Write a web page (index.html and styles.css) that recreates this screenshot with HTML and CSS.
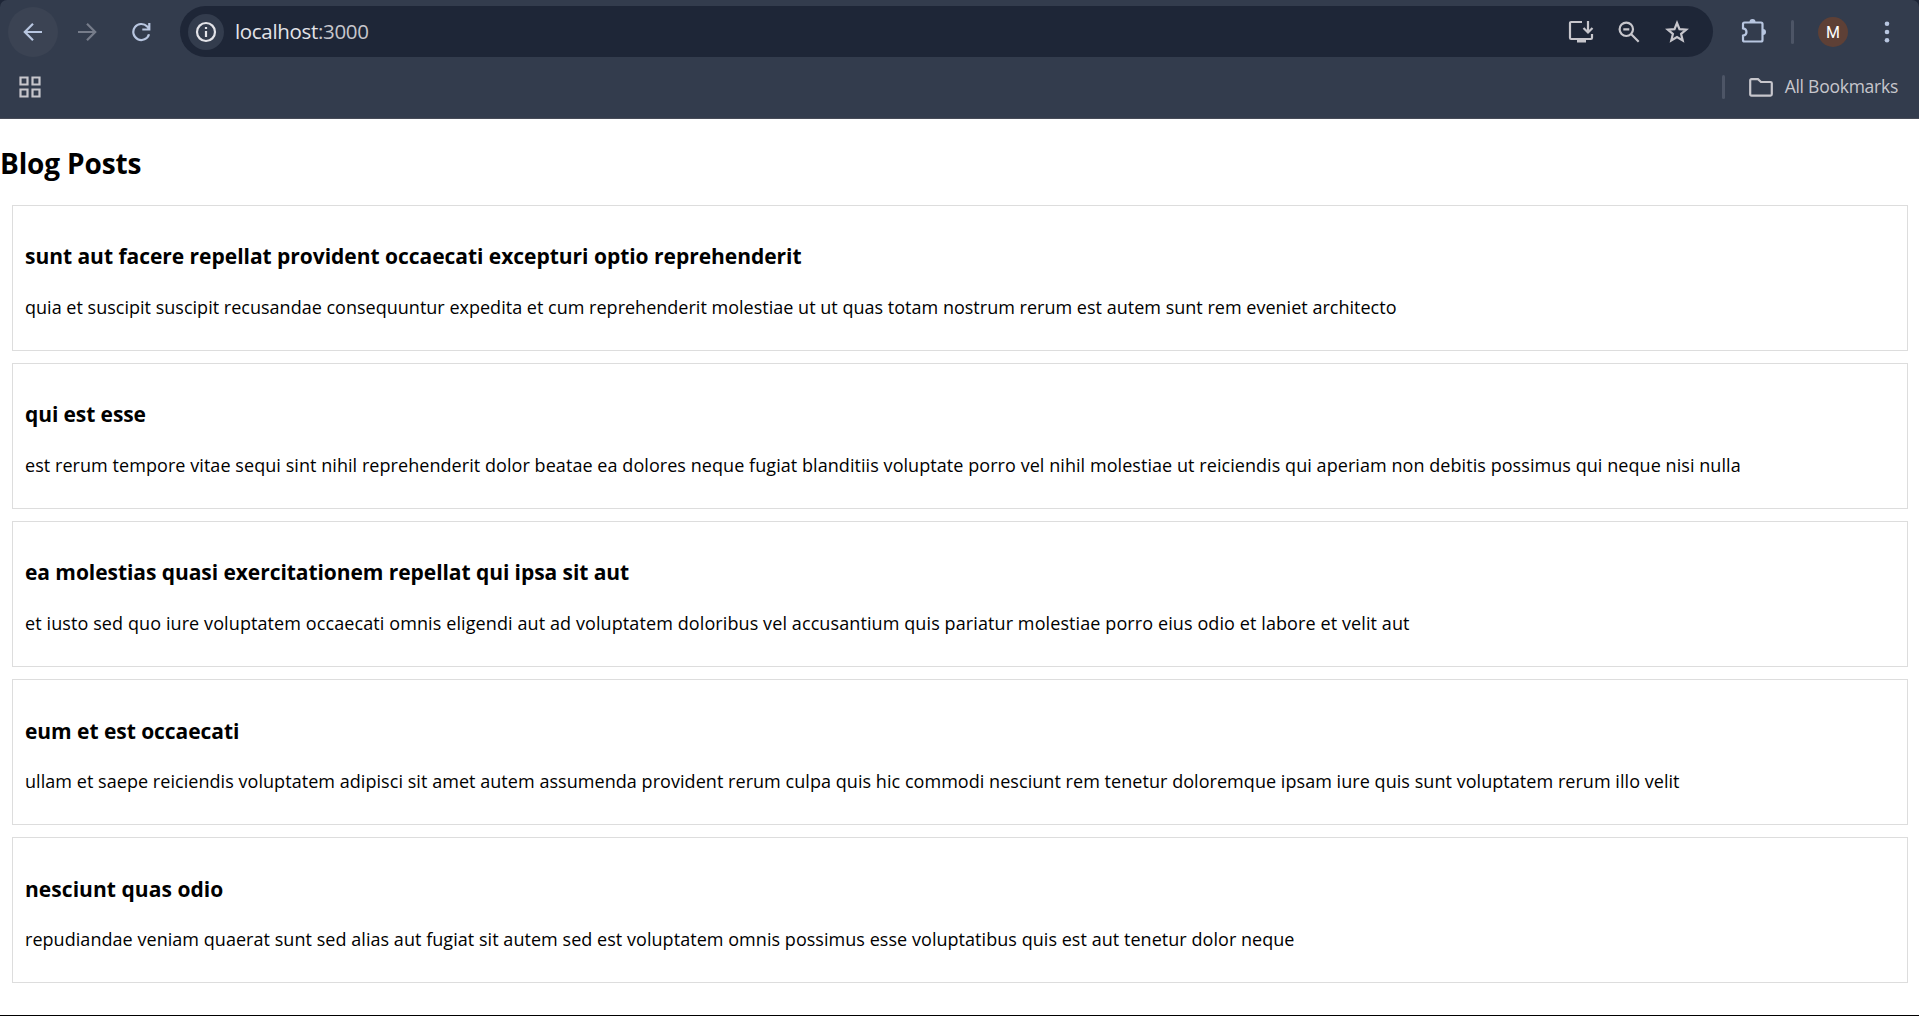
FILE: index.html
```html
<!DOCTYPE html>
<html lang="en">
<head>
<meta charset="utf-8">
<title>Blog Posts</title>
<link rel="stylesheet" href="styles.css">
</head>
<body>
<header class="browser">
  <div class="toolbar">
    <button class="nav nav-back" aria-label="Back"><svg width="20" height="20" viewBox="0 0 20 20"><path d="M19 10H2.5M10 1.8 1.8 10l8.200 8.200"/></svg></button>
    <button class="nav nav-forward" aria-label="Forward"><svg width="20" height="20" viewBox="0 0 20 20"><path d="M1 10h16.500M10 1.800 18.200 10 10 18.200"/></svg></button>
    <button class="nav" aria-label="Reload"><svg width="20" height="20" viewBox="0 0 20 20"><path d="M18 12.200A8 8 0 1 1 16.200 4.600L18 6.500M18.300 1v6.500h-7"/></svg></button>
    <div class="address">
      <span class="site-info"><svg width="22" height="22" viewBox="0 0 22 22"><circle cx="11" cy="11" r="9"/><path d="M11 10v6M11 6v2"/></svg></span>
      <span class="url">localhost<span class="port">:3000</span></span>
      <span class="address-icons">
        <svg width="26" height="24" viewBox="0 0 26 24"><path d="M14 2H3.200Q2 2 2 3.200v14.600Q2 19 3.200 19h19.600q1.200 0 1.200-1.200V14M20 1v11M15.500 8l4.500 4.500L24.500 8"/><path class="solid" d="M9 19h9v3.500h-9z"/></svg>
        <svg width="22" height="22" viewBox="0 0 22 22"><circle cx="8.300" cy="8.300" r="6.700"/><path d="m13 13 7.700 7.700M5.300 8.300h6"/></svg>
        <svg width="24" height="23" viewBox="0 0 24 23"><path d="m12 3 2.500 6.200 6.700.5-5.100 4.300 1.600 6.500L12 17l-5.700 3.500L7.900 14 2.800 9.700l6.700-.5z"/></svg>
      </span>
    </div>
    <svg class="extensions" width="26" height="26" viewBox="0 0 26 26"><path d="M3.500 4.500H20Q21.500 4.500 21.500 6v16q0 1.500-1.500 1.500H3.500Q2 23.500 2 22v-4.300q3.500-.5 3.500-3.700T2 10.300V6Q2 4.500 3.500 4.500z"/><path class="solid" d="M8.500 4a3 3 0 0 1 6 0zM22 11a3 3 0 0 1 0 6z"/></svg>
    <span class="divider"></span>
    <span class="avatar">M</span>
    <svg class="menu" width="6" height="22" viewBox="0 0 6 22"><circle cx="3" cy="2.700" r="2.300"/><circle cx="3" cy="11" r="2.300"/><circle cx="3" cy="19.300" r="2.300"/></svg>
  </div>
  <div class="bookmarks">
    <svg width="22" height="22" viewBox="0 0 22 22"><path d="M1.500 1.500h7v7h-7zM13.500 1.500h7v7h-7zM1.500 13.500h7v7h-7zM13.500 13.500h7v7h-7z"/></svg>
    <span class="divider"></span>
    <svg class="folder" width="24" height="19" viewBox="0 0 24 19"><path d="M1.200 2.500q0-1.300 1.300-1.300H9L12 4h9.500q1.300 0 1.300 1.300v11q0 1.300-1.300 1.300h-19q-1.300 0-1.300-1.300z"/></svg>
    <span class="bookmarks-label">All Bookmarks</span>
  </div>
</header>
<main>
  <h1>Blog Posts</h1>
  <article class="post"><h3>sunt aut facere repellat provident occaecati excepturi optio reprehenderit</h3><p>quia et suscipit suscipit recusandae consequuntur expedita et cum reprehenderit molestiae ut ut quas totam nostrum rerum est autem sunt rem eveniet architecto</p></article>
  <article class="post"><h3>qui est esse</h3><p>est rerum tempore vitae sequi sint nihil reprehenderit dolor beatae ea dolores neque fugiat blanditiis voluptate porro vel nihil molestiae ut reiciendis qui aperiam non debitis possimus qui neque nisi nulla</p></article>
  <article class="post"><h3>ea molestias quasi exercitationem repellat qui ipsa sit aut</h3><p>et iusto sed quo iure voluptatem occaecati omnis eligendi aut ad voluptatem doloribus vel accusantium quis pariatur molestiae porro eius odio et labore et velit aut</p></article>
  <article class="post"><h3>eum et est occaecati</h3><p>ullam et saepe reiciendis voluptatem adipisci sit amet autem assumenda provident rerum culpa quis hic commodi nesciunt rem tenetur doloremque ipsam iure quis sunt voluptatem rerum illo velit</p></article>
  <article class="post"><h3>nesciunt quas odio</h3><p>repudiandae veniam quaerat sunt sed alias aut fugiat sit autem sed est voluptatem omnis possimus esse voluptatibus quis est aut tenetur dolor neque</p></article>
</main>
</body>
</html>
```
FILE: styles.css
```css
* { box-sizing: border-box; }
body {
  margin: 0;
  height: 1016px;
  overflow: hidden;
  background: #fff;
  border-bottom: 1px solid #000;
  color: #000;
  font-family: "Open Sans", "Noto Sans", sans-serif;
}
svg { display: block; flex: none; fill: none; stroke: #c7c6cc; stroke-width: 2.2; }
.solid { fill: #c7c6cc; stroke: none; }

.browser { height: 119px; background: #1e2637; border-bottom: 1px solid #474b57; }
.toolbar {
  display: flex; align-items: center; height: 57px; padding: 6px 29px 0 8px;
  border-radius: 7px 7px 0 0; background: #333c4d;
}
.nav {
  display: flex; align-items: center; justify-content: center;
  width: 50px; height: 50px; margin-right: 4px; padding: 0;
  border: 0; border-radius: 50%; background: none;
}
.nav svg { stroke: #b8c6e0; }
.nav-back { background: #3b4353; }
.nav-forward svg { stroke: #767c8a; }
.address {
  display: flex; align-items: center;
  width: 1533px; height: 51px; margin-left: 10px; padding: 0 24px 0 8px;
  border-radius: 26px; background: #1e2637;
}
.site-info {
  display: flex; align-items: center; justify-content: center;
  width: 36px; height: 36px; border-radius: 50%; background: #333c4d;
}
.site-info svg { stroke: #e3e3e8; }
.url { margin: -2px 0 0 11px; font-size: 20.500px; line-height: 28px; letter-spacing: -.32px; color: #e3e3e8; }
.port { color: #c7c6cc; }
.address-icons { display: flex; align-items: center; gap: 24px; margin-left: auto; }
.address-icons svg:last-child { margin-left: 1px; }
.extensions { margin: -2px 0 0 28px; stroke: #b8c6e0; }
.extensions .solid { fill: #b8c6e0; }
.divider { width: 3px; height: 24px; border-radius: 2px; background: #4d5566; }
.toolbar .divider { margin-left: 24px; }
.avatar {
  width: 30px; height: 30px; margin-left: 24px;
  border-radius: 50%; background: #5e4036; color: #fff;
  font: 400 16px/31px Roboto, sans-serif; text-align: center;
}
.menu { margin-left: auto; fill: #b8c6e0; stroke: none; }
.bookmarks {
  display: flex; align-items: center; height: 61px; padding: 0 21px 1px 19px;
  background: #333c4d;
}
.bookmarks .divider { margin-left: auto; }
.folder { margin-left: 24px; }
.bookmarks-label { margin: -2px 0 0 12px; font-size: 17.500px; letter-spacing: -.25px; color: #c7c6cc; }

h1 { margin: 24px 0 21px; font-size: 28px; line-height: 41px; letter-spacing: -.15px; }
.post {
  height: 146px; margin: 0 11px 12px 12px; padding: 35px 12px 0;
  border: 1px solid #ddd;
}
h3 { margin: 0 0 21px; font-size: 21px; line-height: 30px; white-space: nowrap; }
p { margin: 0; font-size: 18px; line-height: 30px; white-space: nowrap; }

.post:nth-of-type(1) h3 { letter-spacing: -.03px; }
.post:nth-of-type(1) p { letter-spacing: .012px; }
.post:nth-of-type(2) h3 { letter-spacing: -.1px; }
.post:nth-of-type(2) p { letter-spacing: .06px; }
.post:nth-of-type(3) h3 { letter-spacing: -.063px; }
.post:nth-of-type(3) p { letter-spacing: .098px; }
.post:nth-of-type(4) h3 { letter-spacing: -.05px; }
.post:nth-of-type(4) p { letter-spacing: .048px; }
.post:nth-of-type(5) h3 { letter-spacing: .05px; }
.post:nth-of-type(5) p { letter-spacing: .044px; }
.post:nth-of-type(n+4) { padding-top: 36px; }
.post:nth-of-type(n+4) h3 { margin-bottom: 20px; }
```
